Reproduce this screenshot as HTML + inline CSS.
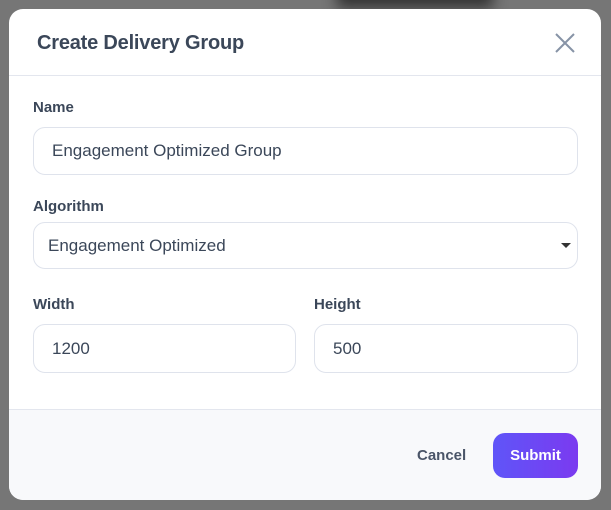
<!DOCTYPE html><html><head><style>
body{margin:0;width:611px;height:510px;background:#767676;font-family:"Liberation Sans",sans-serif;position:relative;overflow:hidden}
.sh{position:absolute;left:345px;top:-20px;width:140px;height:20px;box-shadow:0 0 14px 8px #333;background:#444}
.m{position:absolute;left:9px;top:9px;width:592px;height:491px;background:#fff;border-radius:14px;overflow:hidden}
.h{height:66px;border-bottom:1px solid #e3e6ee;position:relative}
.h h1{margin:0;position:absolute;left:28px;top:23px;font-size:20px;color:#3b4759;font-weight:bold;letter-spacing:-0.2px}
.x{position:absolute;left:546px;top:24px}
label{position:absolute;font-size:15px;font-weight:bold;color:#3b4759}
.i{position:absolute;border:1px solid #dfe3ec;border-radius:12px;box-sizing:border-box;font-size:17px;color:#3b4759;padding-left:18px;display:flex;align-items:center}
.f{position:absolute;left:0;top:400px;width:100%;height:91px;background:#f8f9fb;border-top:1px solid #e3e6ee}
.c{position:absolute;left:408px;top:37px;font-size:15px;color:#4a5568;font-weight:bold}
.s{position:absolute;left:484px;top:23px;width:85px;height:45px;border-radius:12px;background:linear-gradient(90deg,#5f55f8,#7b3af0);color:#fff;font-size:15px;font-weight:bold;display:flex;align-items:center;justify-content:center}
</style></head><body><div class="sh"></div>
<div class="m">
<div class="h"><h1>Create Delivery Group</h1><svg class="x" width="20" height="20" viewBox="0 0 20 20"><path d="M1 1L19 19M19 1L1 19" stroke="#8793a6" stroke-width="2" fill="none"/></svg></div>
<label style="left:24px;top:90px">Name</label>
<div class="i" style="left:24px;top:118px;width:545px;height:48px">Engagement Optimized Group</div>
<label style="left:24px;top:189px">Algorithm</label>
<div class="i" style="left:24px;top:213px;width:545px;height:47px;padding-left:14px">Engagement Optimized<svg style="position:absolute;right:6px;top:20px" width="10" height="6"><path d="M0 0H10L5 5Z" fill="#333"/></svg></div>
<label style="left:24px;top:287px">Width</label>
<div class="i" style="left:24px;top:315px;width:263px;height:49px">1200</div>
<label style="left:305px;top:287px">Height</label>
<div class="i" style="left:305px;top:315px;width:264px;height:49px">500</div>
<div class="f"><div class="c">Cancel</div><div class="s">Submit</div></div>
</div></body></html>
